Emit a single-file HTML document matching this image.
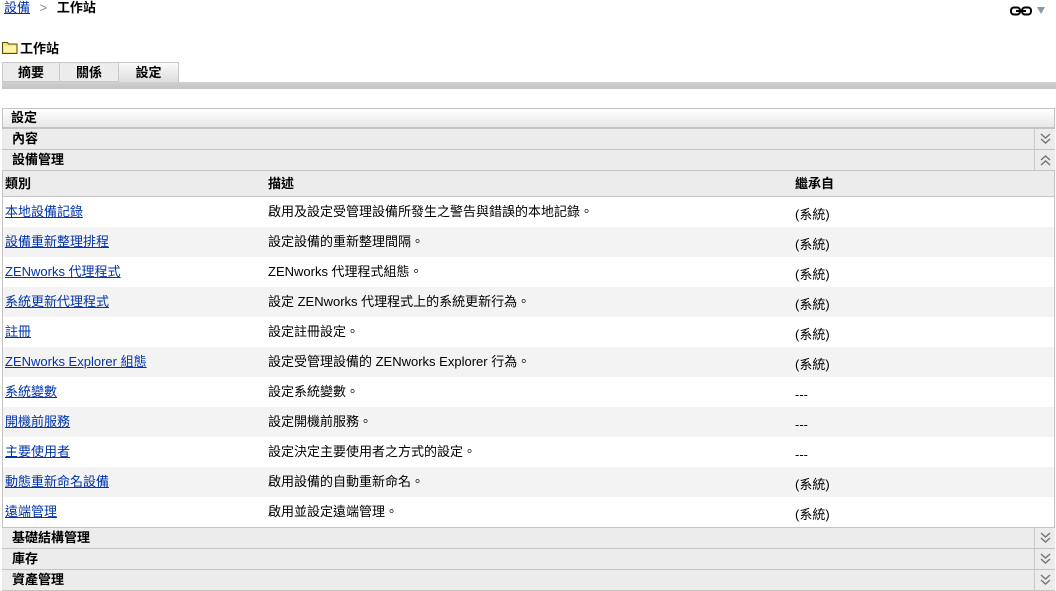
<!DOCTYPE html>
<html><head><meta charset="utf-8"><style>
*{margin:0;padding:0;box-sizing:border-box}
body{width:1056px;height:591px;background:#fff;font-family:"Liberation Sans","Noto Sans CJK TC",sans-serif;font-size:13px;color:#000;position:relative;overflow:hidden}
.a{position:absolute}
a{color:#0033aa;text-decoration:underline}
.b{font-weight:bold}
.sec{position:absolute;left:2px;width:1053px;height:21px;background:#ececec;border-top:1px solid #c4c4c4;font-weight:bold;font-size:13px;line-height:19px;padding-left:10px}
.ic{position:absolute;right:0;top:0;width:21px;height:20px;border-left:1px solid #c8c8c8}
.ic svg{position:absolute;left:5px;top:4px}
.row{position:absolute;left:3px;width:1051px;height:30px;line-height:30px}
.row span{position:absolute;top:0}
</style></head><body>
<div class="a" style="left:4px;top:0;font-size:13px;line-height:16px"><a href="#">設備</a> <span style="color:#888;margin:0 6px">&gt;</span> <b>工作站</b></div>
<svg class="a" style="left:1010px;top:6px" width="22" height="10" viewBox="0 0 22 10"><rect x="1" y="1.5" width="9" height="7" rx="3" fill="none" stroke="#000" stroke-width="2"/><rect x="12" y="1.5" width="9" height="7" rx="3" fill="none" stroke="#000" stroke-width="2"/><line x1="6" y1="5" x2="16" y2="5" stroke="#000" stroke-width="2"/></svg>
<svg class="a" style="left:1037px;top:7px" width="8" height="7"><polygon points="0,0 8,0 4,7" fill="#8899aa"/></svg>
<svg class="a" style="left:2px;top:41px" width="16" height="13"><path d="M0.5 1.5h5l1 1.5h8.5v9.5h-14.5z" fill="#f5e27a" stroke="#5a4a10"/><rect x="2" y="5" width="12" height="6" fill="#fff3a8"/></svg>
<div class="a b" style="left:20px;top:41px;font-size:13px;line-height:16px">工作站</div>
<div class="a" style="left:2px;top:62px;width:58px;height:20px;background:#ececec;border:1px solid #c8c8c8;text-align:center;font-weight:bold;line-height:19px">摘要</div>
<div class="a" style="left:60px;top:62px;width:59px;height:20px;background:#ececec;border:1px solid #c8c8c8;border-left:none;text-align:center;font-weight:bold;line-height:19px">關係</div>
<div class="a" style="left:119px;top:62px;width:60px;height:21px;background:linear-gradient(#fafafa,#dcdcdc);border:1px solid #c8c8c8;border-left:none;border-bottom:none;text-align:center;font-weight:bold;line-height:19px">設定</div>
<div class="a" style="left:2px;top:82px;width:1054px;height:7px;background:linear-gradient(#d0d0d0,#c4c4c4)"></div>
<div class="a" style="left:2px;top:108px;width:1053px;height:483px;border:1px solid #c4c4c4;border-bottom:none"></div>
<div class="a" style="left:3px;top:109px;width:1051px;height:19px;background:linear-gradient(#fff,#e8e8e8);font-weight:bold;line-height:17px;padding-left:8px;border-bottom:1px solid #c4c4c4">設定</div>
<div class="sec" style="top:128px">內容<div class="ic"><svg width="11" height="12"><path d="M1 1l4.5 4 4.5-4M1 6l4.5 4 4.5-4" fill="none" stroke="#777" stroke-width="1.5"/></svg></div></div>
<div class="sec" style="top:149px">設備管理<div class="ic"><svg width="11" height="12"><path d="M1 6l4.5-4 4.5 4M1 11l4.5-4 4.5 4" fill="none" stroke="#777" stroke-width="1.5"/></svg></div></div>
<div class="a" style="left:3px;top:170px;width:1051px;height:27px;background:#ececec;border-top:1px solid #c4c4c4;border-bottom:1px solid #c4c4c4;font-weight:bold;line-height:25px">
<span class="a" style="left:2px">類別</span><span class="a" style="left:265px">描述</span><span class="a" style="left:792px">繼承自</span></div>
<div class="row" style="top:197px"><span style="left:2px"><a href="#">本地設備記錄</a></span><span style="left:265px">啟用及設定受管理設備所發生之警告與錯誤的本地記錄。</span><span style="left:792px;top:3px">(系統)</span></div>
<div class="row" style="top:227px;background:#f3f3f3"><span style="left:2px"><a href="#">設備重新整理排程</a></span><span style="left:265px">設定設備的重新整理間隔。</span><span style="left:792px;top:3px">(系統)</span></div>
<div class="row" style="top:257px"><span style="left:2px"><a href="#">ZENworks 代理程式</a></span><span style="left:265px">ZENworks 代理程式組態。</span><span style="left:792px;top:3px">(系統)</span></div>
<div class="row" style="top:287px;background:#f3f3f3"><span style="left:2px"><a href="#">系統更新代理程式</a></span><span style="left:265px">設定 ZENworks 代理程式上的系統更新行為。</span><span style="left:792px;top:3px">(系統)</span></div>
<div class="row" style="top:317px"><span style="left:2px"><a href="#">註冊</a></span><span style="left:265px">設定註冊設定。</span><span style="left:792px;top:3px">(系統)</span></div>
<div class="row" style="top:347px;background:#f3f3f3"><span style="left:2px"><a href="#">ZENworks Explorer 組態</a></span><span style="left:265px">設定受管理設備的 ZENworks Explorer 行為。</span><span style="left:792px;top:3px">(系統)</span></div>
<div class="row" style="top:377px"><span style="left:2px"><a href="#">系統變數</a></span><span style="left:265px">設定系統變數。</span><span style="left:792px;top:3px">---</span></div>
<div class="row" style="top:407px;background:#f3f3f3"><span style="left:2px"><a href="#">開機前服務</a></span><span style="left:265px">設定開機前服務。</span><span style="left:792px;top:3px">---</span></div>
<div class="row" style="top:437px"><span style="left:2px"><a href="#">主要使用者</a></span><span style="left:265px">設定決定主要使用者之方式的設定。</span><span style="left:792px;top:3px">---</span></div>
<div class="row" style="top:467px;background:#f3f3f3"><span style="left:2px"><a href="#">動態重新命名設備</a></span><span style="left:265px">啟用設備的自動重新命名。</span><span style="left:792px;top:3px">(系統)</span></div>
<div class="row" style="top:497px"><span style="left:2px"><a href="#">遠端管理</a></span><span style="left:265px">啟用並設定遠端管理。</span><span style="left:792px;top:3px">(系統)</span></div>
<div class="sec" style="top:527px">基礎結構管理<div class="ic"><svg width="11" height="12"><path d="M1 1l4.5 4 4.5-4M1 6l4.5 4 4.5-4" fill="none" stroke="#777" stroke-width="1.5"/></svg></div></div>
<div class="sec" style="top:548px">庫存<div class="ic"><svg width="11" height="12"><path d="M1 1l4.5 4 4.5-4M1 6l4.5 4 4.5-4" fill="none" stroke="#777" stroke-width="1.5"/></svg></div></div>
<div class="sec" style="top:569px;border-bottom:1px solid #c4c4c4;height:22px">資產管理<div class="ic"><svg width="11" height="12"><path d="M1 1l4.5 4 4.5-4M1 6l4.5 4 4.5-4" fill="none" stroke="#777" stroke-width="1.5"/></svg></div></div>
</body></html>
